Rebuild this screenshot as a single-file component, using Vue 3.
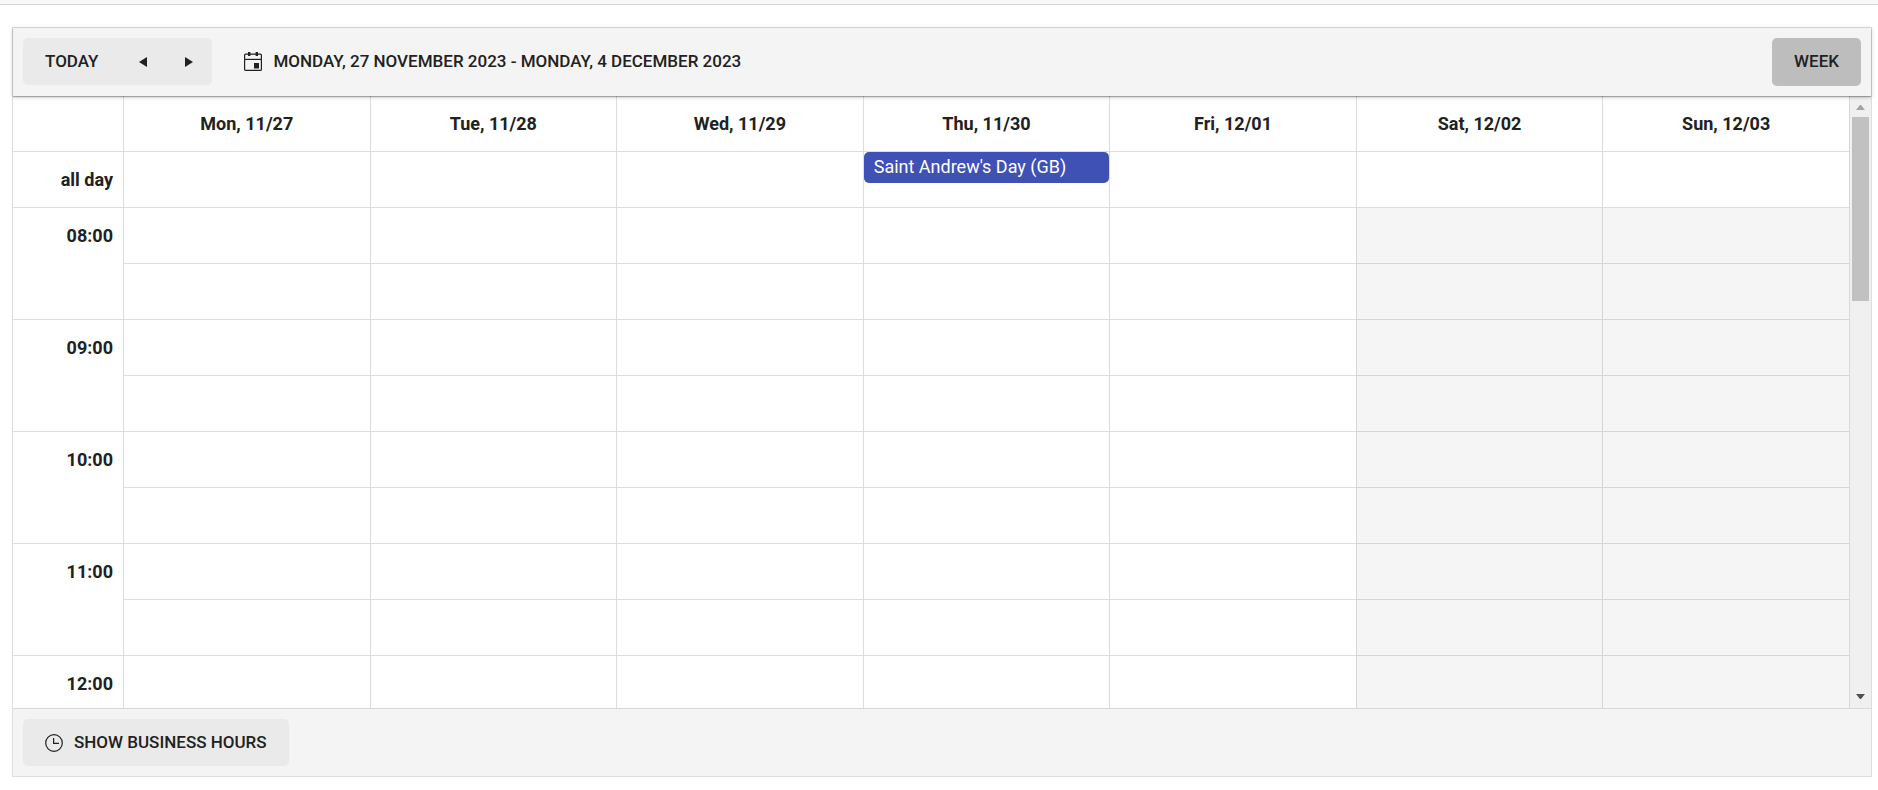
<script setup>
const days = [
  { label: 'Mon, 11/27' },
  { label: 'Tue, 11/28' },
  { label: 'Wed, 11/29' },
  { label: 'Thu, 11/30', event: "Saint Andrew's Day (GB)" },
  { label: 'Fri, 12/01' },
  { label: 'Sat, 12/02', weekend: true },
  { label: 'Sun, 12/03', weekend: true },
]
const hours = ['08:00', '09:00', '10:00', '11:00', '12:00']
</script>

<template>
  <div class="page">
    <div class="strip"></div>
    <main class="scheduler">
      <header class="toolbar">
        <div class="nav-group">
          <button type="button" class="btn">TODAY</button>
          <button type="button" class="arrow" aria-label="Previous">
            <svg width="8" height="10" viewBox="0 0 8 10"><path d="M8 0v10L0 5z" /></svg>
          </button>
          <button type="button" class="arrow" aria-label="Next">
            <svg width="8" height="10" viewBox="0 0 8 10"><path d="M0 0v10l8-5z" /></svg>
          </button>
        </div>
        <button type="button" class="btn range">
          <svg width="18" height="19" viewBox="0 0 18 19">
            <rect x="0.6" y="2.1" width="16.8" height="16.3" rx="1" fill="none" stroke="currentColor" stroke-width="1.2" />
            <path d="M1 7.4h16" stroke="currentColor" stroke-width="1.2" />
            <path d="M4 0h2.4v4H4zM11.6 0H14v4h-2.4zM10 11h5v5.4h-5z" />
          </svg>
          <span>MONDAY, 27 NOVEMBER 2023 - MONDAY, 4 DECEMBER 2023</span>
        </button>
        <button type="button" class="btn week">WEEK</button>
      </header>

      <div class="body">
        <div class="viewport">
          <table>
            <colgroup>
              <col class="label-col" />
              <col v-for="d in days" :key="d.label" />
            </colgroup>
            <thead>
              <tr>
                <td></td>
                <th v-for="d in days" :key="d.label" scope="col">{{ d.label }}</th>
              </tr>
            </thead>
            <tbody>
              <tr>
                <th scope="row">all day</th>
                <td v-for="d in days" :key="d.label">
                  <div v-if="d.event" class="event">{{ d.event }}</div>
                </td>
              </tr>
              <template v-for="h in hours" :key="h">
                <tr>
                  <th scope="row" rowspan="2"><div class="hour">{{ h }}</div></th>
                  <td v-for="d in days" :key="d.label" :class="{ weekend: d.weekend }"></td>
                </tr>
                <tr>
                  <td v-for="d in days" :key="d.label" :class="{ weekend: d.weekend }"></td>
                </tr>
              </template>
            </tbody>
          </table>
        </div>
        <div class="scrollbar">
          <svg class="up" width="9" height="5" viewBox="0 0 9 5"><path d="M0 5h9L5 0H4z" /></svg>
          <div class="thumb"></div>
          <svg class="down" width="9" height="5" viewBox="0 0 9 5"><path d="M0 0h9L5 5H4z" /></svg>
        </div>
      </div>

      <footer class="footer">
        <button type="button" class="btn hours">
          <svg width="18" height="18" viewBox="0 0 18 18">
            <circle cx="9" cy="9" r="8.3" fill="none" stroke="currentColor" stroke-width="1.2" />
            <path d="M8.6 4v5.4H14" fill="none" stroke="currentColor" stroke-width="1.2" />
          </svg>
          <span>SHOW BUSINESS HOURS</span>
        </button>
      </footer>
    </main>
  </div>
</template>

<style>
body {
  background: #fff;
}
</style>

<style scoped>
.page {
  box-sizing: border-box;
  height: 100vh;
  display: flex;
  flex-direction: column;
  padding-bottom: 13px;
  font-family: Roboto, "Liberation Sans", sans-serif;
  font-size: 18px;
  line-height: 25px;
  color: #212121;
}
.strip {
  flex: none;
  height: 4px;
  background: #f7f8fa;
  border-bottom: 1px solid #d5d6d8;
}
.scheduler {
  flex: 1;
  min-height: 0;
  display: flex;
  flex-direction: column;
  margin: 22px 6px 0 12px;
  border: 1px solid #dedede;
}
.toolbar {
  position: relative;
  z-index: 1;
  flex: none;
  display: flex;
  align-items: flex-start;
  padding: 10px;
  background: #f4f4f4;
  box-shadow: 0 1px 4px rgba(0, 0, 0, 0.24), 0 1px 1px rgba(0, 0, 0, 0.26);
}
button {
  border: 0;
  margin: 0;
  background: none;
  font: inherit;
  color: inherit;
}
svg {
  display: block;
  fill: currentColor;
}
.btn {
  display: flex;
  align-items: center;
  gap: 11px;
  height: 47px;
  padding: 0 22px;
  border-radius: 5px;
  font-size: 17px;
  font-weight: 500;
  white-space: nowrap;
}
.nav-group {
  display: flex;
  background: #eaeaea;
  border-radius: 5px;
}
.arrow {
  display: flex;
  align-items: center;
  justify-content: center;
  width: 46px;
  padding: 0;
}
.range {
  margin-left: 10px;
}
.week {
  height: 48px;
  margin-left: auto;
  padding-bottom: 1px;
  background: #bdbdbd;
}
.body {
  flex: 1;
  min-height: 0;
  display: flex;
  overflow: hidden;
}
.viewport {
  flex: 1;
  min-width: 0;
  overflow: hidden;
}
table {
  width: 100%;
  table-layout: fixed;
  border-collapse: separate;
  border-spacing: 0;
}
.label-col {
  width: 110px;
}
tr {
  height: 56px;
}
th,
td {
  box-sizing: border-box;
  height: 56px;
  padding: 0;
  border-bottom: 1px solid rgba(0, 0, 0, 0.13);
  font-weight: 700;
}
td,
thead th {
  border-left: 1px solid rgba(0, 0, 0, 0.13);
  vertical-align: top;
}
thead th {
  vertical-align: middle;
}
thead td {
  border-left: 0;
}
tbody th {
  padding-right: 10px;
  text-align: right;
  vertical-align: middle;
}
tbody th[rowspan] {
  vertical-align: top;
}
.hour {
  line-height: 55px;
}
.weekend {
  background: #f5f5f5;
}
.event {
  height: 31px;
  padding: 0 10px;
  border-radius: 5px;
  background: #3f51b5;
  color: #fff;
  font-weight: 400;
  line-height: 30px;
  white-space: nowrap;
  overflow: hidden;
}
.scrollbar {
  flex: none;
  display: flex;
  flex-direction: column;
  align-items: center;
  box-sizing: border-box;
  width: 22px;
  padding: 9px 0;
  border-left: 1px solid #d8d8d8;
  background: #f0f0f0;
}
.thumb {
  width: 17px;
  height: 31%;
  margin-top: 7px;
  background: #c1c1c1;
}
.up {
  color: #a3a3a3;
}
.down {
  margin-top: auto;
  color: #505050;
}
.footer {
  flex: none;
  display: flex;
  padding: 10px;
  border-top: 1px solid #d8d8d8;
  background: #f4f4f4;
}
.hours {
  background: #eaeaea;
}
</style>
